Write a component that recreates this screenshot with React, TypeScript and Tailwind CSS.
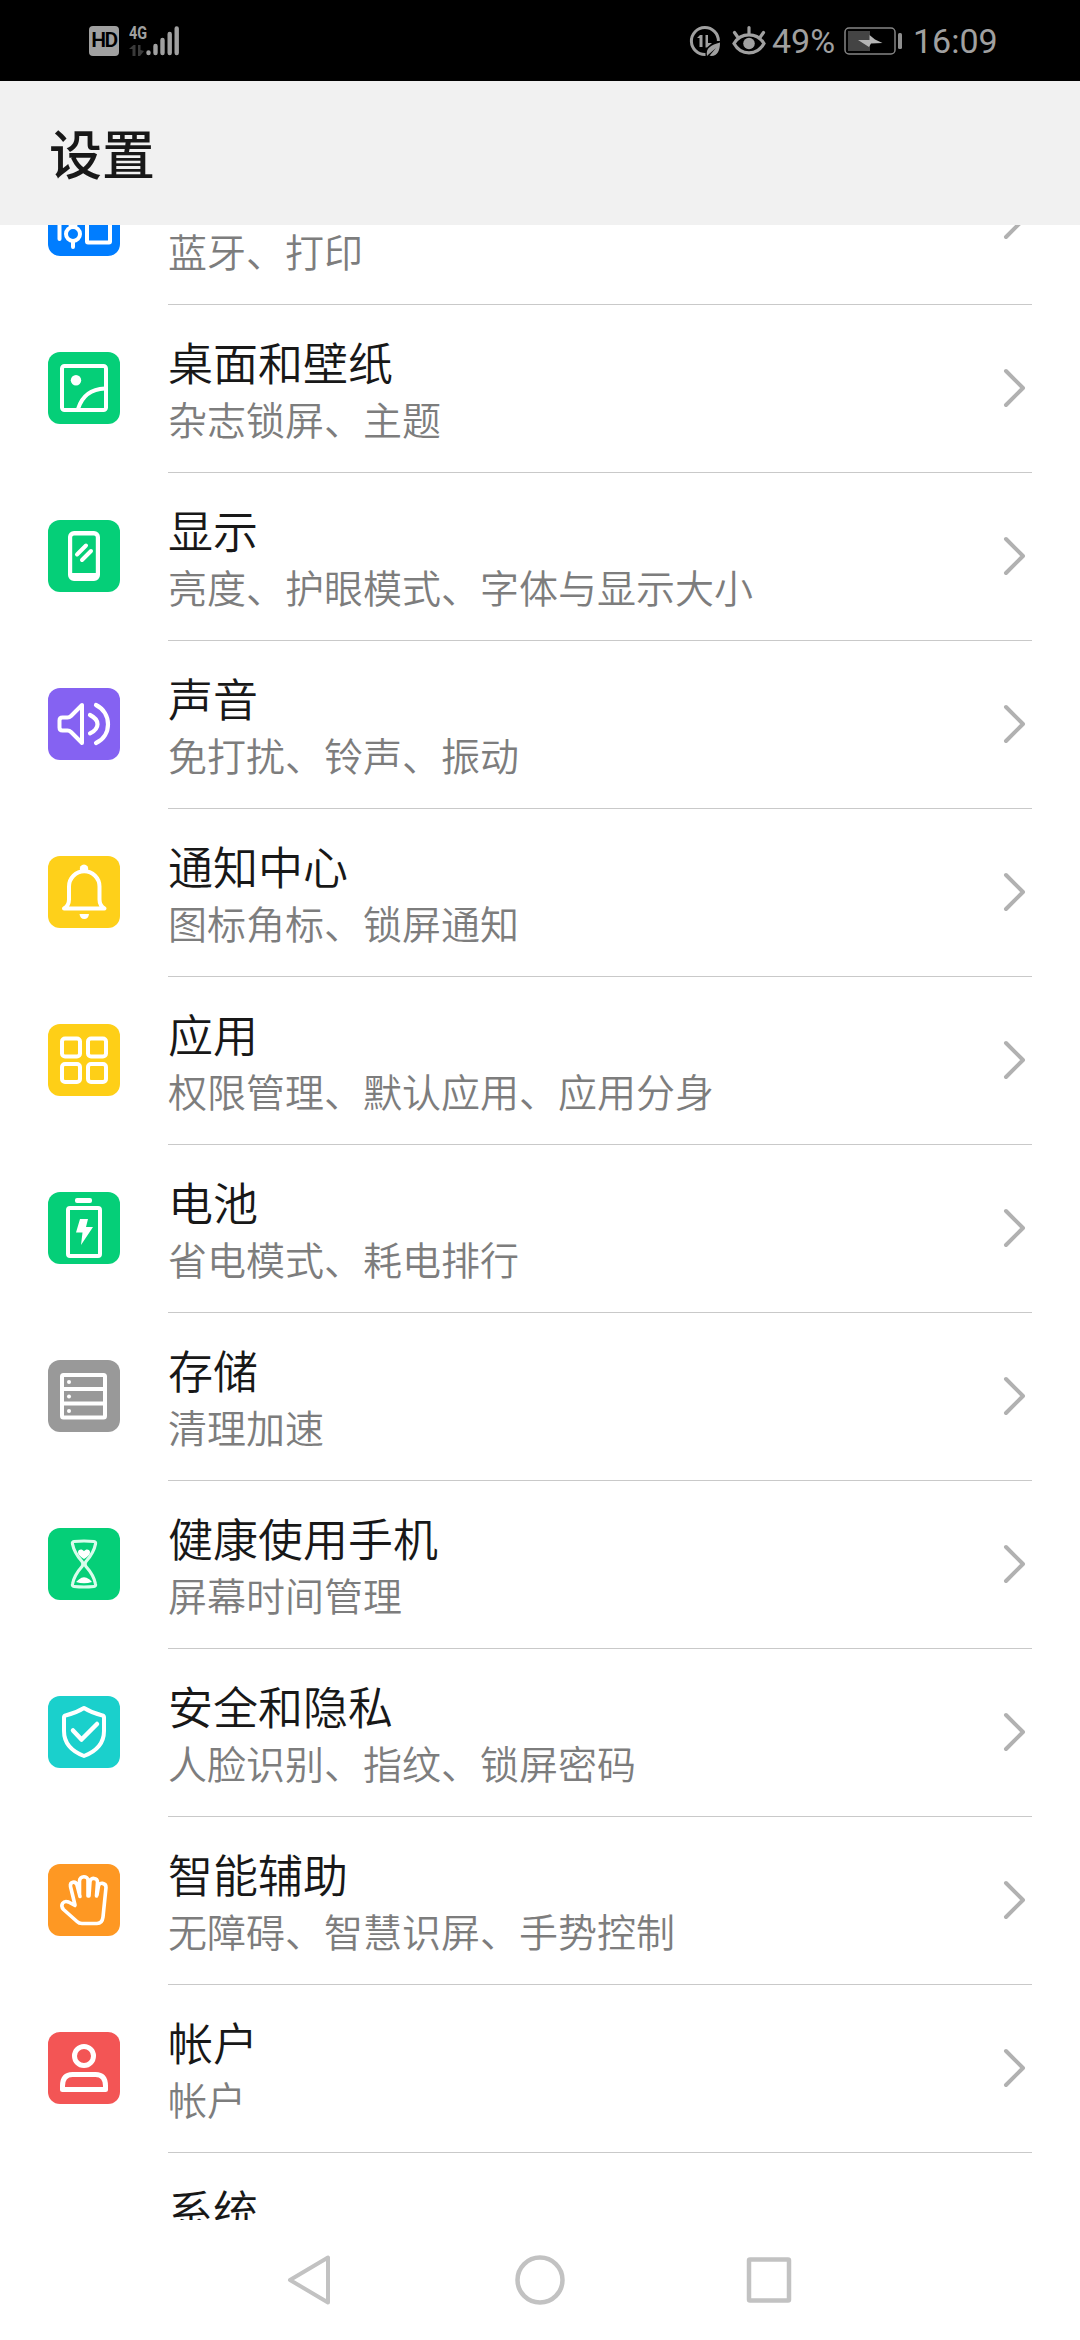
import type { ReactNode } from "react";

type Item = {
    title: string;
    summary?: string;
    color: string;
    icon: ReactNode;
};

// every glyph is drawn on the 72x72 tile
const items: Item[] = [
    {
        title: "更多连接",
        summary: "蓝牙、打印",
        color: "bg-[#007dff]",
        icon: (
            <>
                <path d="M11.5 24v31" />
                <circle cx="25" cy="50" r="7" />
                <path d="M25 57v6M20 24v14M30 24v14M20 38l5 5l5-5" />
                <rect x="39" y="24" width="23" height="34.5" rx="1" />
            </>
        ),
    },
    {
        title: "桌面和壁纸",
        summary: "杂志锁屏、主题",
        color: "bg-[#05cf78]",
        icon: (
            <>
                <rect x="14" y="14" width="44" height="44" rx="2.5" />
                <circle cx="28" cy="28.3" r="5.2" fill="#fff" stroke="none" />
                <path d="M30 57C34 44 43 37 57 36.5" />
            </>
        ),
    },
    {
        title: "显示",
        summary: "亮度、护眼模式、字体与显示大小",
        color: "bg-[#05cf78]",
        icon: (
            <>
                <path d="M26 11h20a6 6 0 0 1 6 6v38a6 6 0 0 1-6 6H26a6 6 0 0 1-6-6V17a6 6 0 0 1 6-6ZM26 15.5a1.8 1.8 0 0 0-1.8 1.8V53h23.6V17.3a1.8 1.8 0 0 0-1.8-1.8Z" fill="#fff" fillRule="evenodd" stroke="none" />
                <path d="M29 34.5l9-9M34 40l9-9" />
            </>
        ),
    },
    {
        title: "声音",
        summary: "免打扰、铃声、振动",
        color: "bg-[#8562f2]",
        icon: (
            <>
                <path d="M11.5 32.5q0-3 3-3h5q2 0 3.5-1.5L34 17v38L23 44q-1.5-1.5-3.5-1.500h-5q-3 0-3-3Z" />
                <path d="M42 27c6 3 7.5 6 7.5 9.2s-1.5 6.2-7.5 9.2M48 17c8 4 12 11.5 12 19.2S56 51.4 48 55" strokeWidth="4.2" />
            </>
        ),
    },
    {
        title: "通知中心",
        summary: "图标角标、锁屏通知",
        color: "bg-[#fed01a]",
        icon: (
            <>
                <path d="M32 14a4.2 4.2 0 1 1 8 0Z" fill="#fff" stroke="none" />
                <path d="M16 52.5q5-3 5-9V30.5a15 15 0 0 1 30.5 0v13q0 6 5 9Z" />
                <path d="M31.5 58h9.5q-.5 5-4.7 5t-4.8-5Z" fill="#fff" stroke="none" />
            </>
        ),
    },
    {
        title: "应用",
        summary: "权限管理、默认应用、应用分身",
        color: "bg-[#fecf17]",
        icon: (
            <>
                <rect x="14" y="14.5" width="18" height="18" rx="3" />
                <rect x="40" y="14.5" width="18" height="18" rx="3" />
                <rect x="14" y="40" width="18" height="18" rx="3" />
                <rect x="40" y="40" width="18" height="18" rx="3" />
            </>
        ),
    },
    {
        title: "电池",
        summary: "省电模式、耗电排行",
        color: "bg-[#05cf78]",
        icon: (
            <>
                <rect x="27" y="6" width="17" height="5" rx="2" fill="#fff" stroke="none" />
                <rect x="20" y="16" width="32" height="48" rx="2" />
                <path d="M32 27h8l-2 8h7L33 53l1.5-12.5H28Z" fill="#fff" stroke="none" />
            </>
        ),
    },
    {
        title: "存储",
        summary: "清理加速",
        color: "bg-[#999999]",
        icon: (
            <>
                <rect x="14" y="15" width="43" height="42.5" rx="1.5" />
                <path d="M14 29h43M14 43.5h43" />
                <circle cx="21" cy="22" r="2" fill="#fff" stroke="none" />
                <circle cx="21" cy="36.5" r="2" fill="#fff" stroke="none" />
                <circle cx="21" cy="51" r="2" fill="#fff" stroke="none" />
            </>
        ),
    },
    {
        title: "健康使用手机",
        summary: "屏幕时间管理",
        color: "bg-[#05cf78]",
        icon: (
            <g stroke="#d9fcec" strokeWidth="3.2">
                <path d="M26 13.5q10-1 20 0q2 .2 1.5 2.5C46 24 42 29 38 33.5q-2 2.5 0 5C42 43 46 48 47.5 56q.5 2.3-1.5 2.5q-10 1-20 0q-2-.2-1.5-2.5C26 48 30 43 34 38.5q2-2.5 0-5C30 29 26 24 24.5 16q-.5-2.3 1.5-2.5Z" />
                <path d="M36 31c-4-2.5-6-4.5-6-6.8 0-2.8 4-3.7 6-.9 2-2.8 6-1.9 6 .9 0 2.3-2 4.3-6 6.8ZM28 54q3-3 5.5-4.2 2.500-1.2 5 0Q42 51 44 54q-8 2.5-16 0Z" fill="#fff" stroke="none" />
            </g>
        ),
    },
    {
        title: "安全和隐私",
        summary: "人脸识别、指纹、锁屏密码",
        color: "bg-[#1ad0cc]",
        icon: (
            <>
                <path d="M36 12q8 5 18.5 7.5Q56 20 56 21.5V35c0 12-7 20-20 25C23 55 16 47 16 35V21.5q0-1.5 1.5-2Q28 17 36 12Z" />
                <path d="M25 34.5l8.5 9L49 28" strokeWidth="4.5" />
            </>
        ),
    },
    {
        title: "智能辅助",
        summary: "无障碍、智慧识屏、手势控制",
        color: "bg-[#fe9823]",
        icon: (
            <path
                d="M27 41L22.5 22.5c-.8-5 5-6 6.5-1.5l3 11.5M31.5 30V17c0-5.500 8.5-5.5 8.5-.5v15.5M41 32l1-14.5c.5-4.5 8-4 7.5 1L48.5 32M49 31l1.500-9c.7-4 7.500-3.5 7.500 1.500L55 53q-.8 6.5-6 6.5H34q-3 0-5-2L15.5 45.5c-4-4.5 0-9.5 5-7.5L27 41.5"
                strokeWidth="3.6"
            />
        ),
    },
    {
        title: "帐户",
        summary: "帐户",
        color: "bg-[#f35555]",
        icon: (
            <>
                <circle cx="36" cy="24" r="9.5" strokeWidth="5" />
                <path d="M14.5 57.5V54q0-11.5 10-11.5h23q10 0 10 11.5v3.5Z" strokeWidth="5" />
            </>
        ),
    },
];

function StatusBar() {
    return (
        <div className="flex h-[81px] shrink-0 items-center justify-between bg-black pl-[89px] pr-[84px] text-[#a0a0a0]">
            <div className="flex items-center gap-[10px]">
                <div className="flex h-[30px] w-[30px] items-center justify-center rounded-[4px] bg-[#a0a0a0] text-[21px] font-semibold tracking-[-1.5px] text-black">
                    HD
                </div>
                <div className="relative h-[32px] w-[52px]">
                    <span className="absolute left-0 top-[-1px] origin-left scale-x-[0.8] text-[18px] leading-[18px] font-bold">4G</span>
                    <svg width="52" height="32" viewBox="0 0 52 32" fill="none" stroke="currentColor" strokeWidth="4.4" strokeLinecap="round">
                        <path d="M0 24l4.5-4h2v11h-3V24ZM9 20h2.5v5L15 26l-4 5H9Z" fill="#3a3a3a" stroke="none" />
                        <path d="M19.5 27.5v.5M26.5 21v7M33.5 15v13M40.7 9v19M47.7 3.5V28" />
                    </svg>
                </div>
            </div>
            <div className="flex items-center">
                <svg width="32" height="32" viewBox="0 0 32 32" fill="none" stroke="currentColor" strokeWidth="3">
                    <path d="M16.5 29.5A13.5 13.5 0 1 1 29.4 16" />
                    <path d="M8 13l3-3h2.5v12H10.5v-9ZM16.5 10H19v8h4l-5 4.5h-1.5Z" fill="currentColor" stroke="none" />
                    <path d="M18 31c-1.5-8 4-11 13-13.5 0 9-3 14.5-10.5 13.3L27 23l-7.5 6.5Z" fill="currentColor" stroke="none" />
                </svg>
                <svg className="ml-[11px]" width="34" height="32" viewBox="0 0 34 32" fill="none" stroke="currentColor" strokeWidth="3.2" strokeLinecap="round">
                    <path d="M2 18.5C9 7 25 7 32 18.5 25 31 9 31 2 18.5ZM2.5 7.5l3.5 5M17 2.5v6M31.5 7.5l-3.5 5" />
                    <circle cx="17" cy="18.5" r="5.8" fill="currentColor" stroke="none" />
                </svg>
                <span className="ml-[6px] w-[63px] whitespace-nowrap text-[34px] leading-none">49%</span>
                <svg className="ml-[9px]" width="59" height="28" viewBox="0 0 59 28">
                    <rect x="1" y="1" width="50" height="26" rx="4" fill="none" stroke="#858585" strokeWidth="1.5" />
                    <rect x="4" y="4" width="22" height="20" fill="#444" />
                    <path d="M14 13h11.500V8l5.500 4.500 7.500 3.500-11.500.500-2 3.500Z" fill="#b5b5b5" />
                    <rect x="54" y="6" width="4" height="16" rx="1.5" fill="#8f8f8f" />
                </svg>
                <span className="ml-[10px] w-[83px] whitespace-nowrap text-[34px] leading-none">16:09</span>
            </div>
        </div>
    );
}

function SettingRow({ item }: { item: Item }) {
    return (
        <div className="flex h-[168px] shrink-0 pl-12 pr-12">
            <div className={`mt-[47px] h-[72px] w-[72px] shrink-0 overflow-hidden rounded-[12px] ${item.color}`}>
                <svg width="72" height="72" viewBox="0 0 72 72" fill="none" stroke="#fff" strokeWidth="4" strokeLinecap="round" strokeLinejoin="round">
                    {item.icon}
                </svg>
            </div>
            <div className="ml-12 flex flex-1 border-b border-[#c9c9c9]">
                <div className="flex-1 pt-[29px]">
                    <div className="text-[45px] leading-[64px] font-[350] text-[#181818]">{item.title}</div>
                    <div className="-mt-[2px] text-[39px] leading-[52px] font-[350] text-[#7d7d7d]">{item.summary}</div>
                </div>
                <svg className="mt-[63px] mr-[5px]" width="24" height="40" viewBox="0 0 24 40" fill="none" stroke="#b1b1b1" strokeWidth="4" strokeLinecap="round" strokeLinejoin="round">
                    <path d="M3 3L20 20L3 37" />
                </svg>
            </div>
        </div>
    );
}

function NavBar() {
    return (
        <div className="flex h-[120px] shrink-0 items-center justify-center gap-[178px] bg-white">
            <svg width="52" height="52" viewBox="0 0 52 52" fill="none" stroke="#c2c2c2" strokeWidth="4" strokeLinejoin="round">
                <path d="M44 3.5v45L6 26Z" />
            </svg>
            <svg width="52" height="52" viewBox="0 0 52 52" fill="none" stroke="#c2c2c2" strokeWidth="4.5">
                <circle cx="26" cy="26" r="22.5" />
            </svg>
            <svg width="52" height="52" viewBox="0 0 52 52" fill="none" stroke="#c2c2c2" strokeWidth="4.5">
                <rect x="5" y="5.5" width="40" height="41" rx="1" />
            </svg>
        </div>
    );
}

export default function App() {
    return (
        <div className="flex h-[2340px] w-[1080px] flex-col overflow-hidden bg-white font-[Roboto,'Noto_Sans_CJK_SC',sans-serif]">
            <StatusBar />
            <header className="flex h-[144px] shrink-0 items-center bg-[#f1f1f1] pt-2 pl-[49px]">
                <h1 className="text-[53px] leading-none font-medium text-[#181818]">设置</h1>
            </header>
            <main className="flex h-[1995px] shrink-0 flex-col overflow-hidden">
                {/* list is scrolled, the first row sits partly under the header */}
                <div className="-mt-[88px] flex shrink-0 flex-col">
                    {items.map((item) => (
                        <SettingRow key={item.title} item={item} />
                    ))}
                    <div className="h-[168px] pl-[168px] pt-[29px] text-[45px] leading-[64px] font-[350] text-[#181818]">系统</div>
                </div>
            </main>
            <NavBar />
        </div>
    );
}
